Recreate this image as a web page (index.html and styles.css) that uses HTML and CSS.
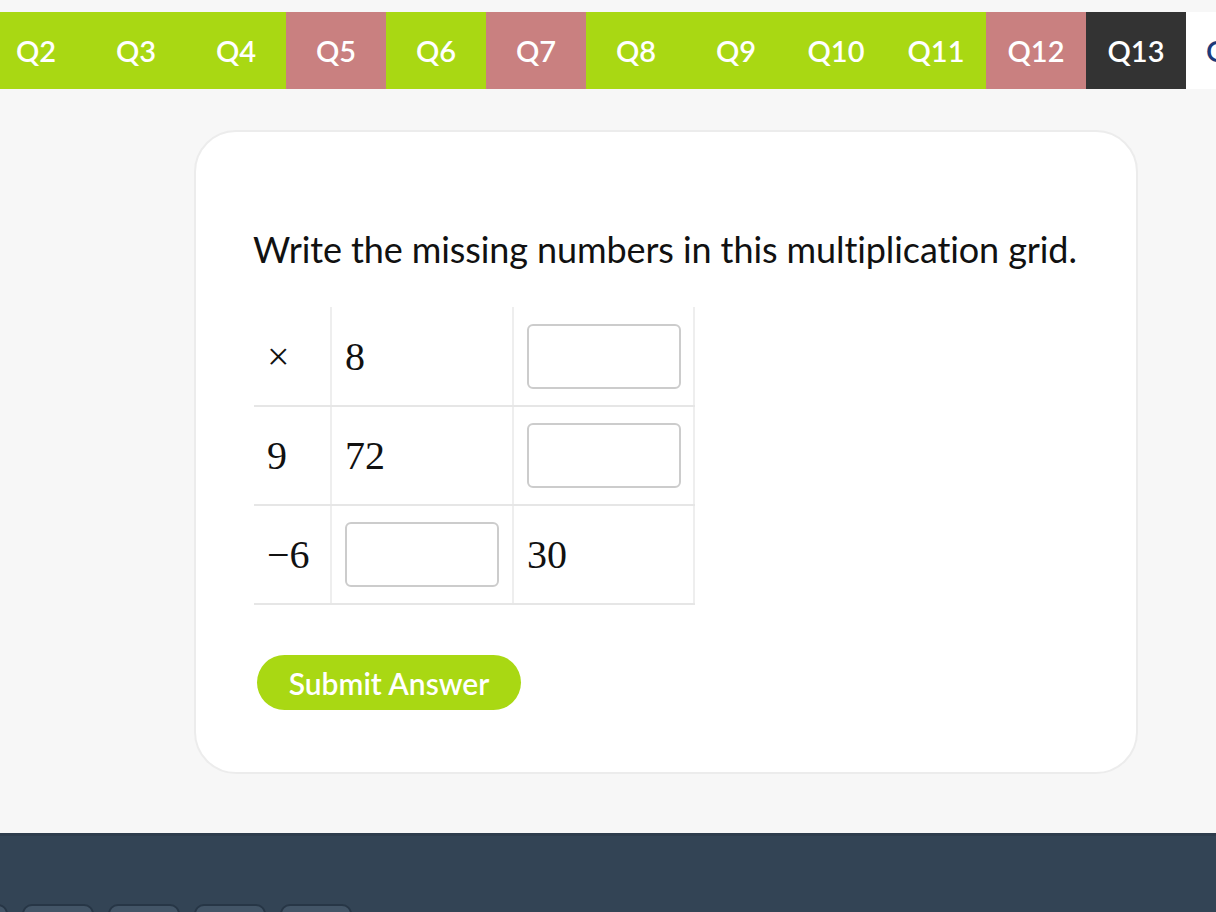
FILE: index.html
```html
<!DOCTYPE html>
<html>
<head>
<meta charset="utf-8">
<link rel="stylesheet" href="styles.css">
</head>
<body>
<nav class="qnav">
  <div class="qlist">
    <div class="qtab ok">Q1</div>
    <div class="qtab ok">Q2</div>
    <div class="qtab ok">Q3</div>
    <div class="qtab ok">Q4</div>
    <div class="qtab bad">Q5</div>
    <div class="qtab ok">Q6</div>
    <div class="qtab bad">Q7</div>
    <div class="qtab ok">Q8</div>
    <div class="qtab ok">Q9</div>
    <div class="qtab ok">Q10</div>
    <div class="qtab ok">Q11</div>
    <div class="qtab bad">Q12</div>
    <div class="qtab dark">Q13</div>
    <div class="qtab current">Q14</div>
  </div>
</nav>
<main class="page">
  <section class="card">
    <h1 class="prompt">Write the missing numbers in this multiplication grid.</h1>
    <table class="grid">
      <tr>
        <td class="head">×</td>
        <td class="mid">8</td>
        <td class="last"><input class="box" type="text"></td>
      </tr>
      <tr>
        <td class="head">9</td>
        <td class="mid">72</td>
        <td class="last"><input class="box" type="text"></td>
      </tr>
      <tr>
        <td class="head">−6</td>
        <td class="mid"><input class="box" type="text"></td>
        <td class="last">30</td>
      </tr>
    </table>
    <button class="submit">Submit Answer</button>
  </section>
</main>
<footer class="footer">
  <div class="keys">
    <div class="key"></div>
    <div class="key"></div>
    <div class="key"></div>
    <div class="key"></div>
    <div class="key"></div>
  </div>
</footer>
</body>
</html>
```
FILE: styles.css
```css
html, body {
  margin: 0;
  padding: 0;
}
body {
  background: #f7f7f7;
  font-family: Lato, "Open Sans", sans-serif;
  width: 1216px;
  height: 912px;
  overflow: hidden;
}
.qnav {
  margin-top: 12px;
  height: 77px;
  overflow: hidden;
}
.qlist {
  display: flex;
  margin-left: -114px;
}
.qtab {
  flex: 0 0 100px;
  height: 77px;
  display: flex;
  align-items: center;
  justify-content: center;
  font-size: 29px;
  font-weight: 600;
  color: #fff;
}
.qtab.ok { background: #a9d813; }
.qtab.bad { background: #c98080; }
.qtab.dark { background: #333333; }
.qtab.current {
  background: #fff;
  color: #1d3a7a;
  justify-content: flex-start;
  padding-left: 20px;
}
.page {
  padding-top: 41px;
  padding-left: 194px;
  height: 744px;
  box-sizing: border-box;
}
.card {
  width: 944px;
  height: 644px;
  box-sizing: border-box;
  background: #fff;
  border: 2px solid #ececec;
  border-radius: 42px;
  padding: 95px 0 0 57px;
}
.prompt {
  margin: 0;
  font-size: 36px;
  font-weight: 400;
  color: #111;
  line-height: 44px;
  letter-spacing: -0.1px;
}
.grid {
  margin-top: 36px;
  margin-left: 1px;
  border-collapse: collapse;
  font-family: "Liberation Serif", "DejaVu Serif", serif;
  font-size: 40px;
  color: #111;
}
.grid td {
  height: 99px;
  padding: 0 12px 0 13px;
  box-sizing: border-box;
  border-bottom: 2px solid #e6e6e6;
  vertical-align: middle;
}
.grid td.head {
  width: 77px;
  border-right: 2px solid #eeeeee;
}
.grid td.mid {
  width: 182px;
  border-right: 2px solid #eeeeee;
}
.grid td.last {
  width: 181px;
  border-right: 2px solid #eeeeee;
}
.box {
  display: block;
  width: 154px;
  height: 65px;
  box-sizing: border-box;
  border: 2px solid #cccccc;
  border-radius: 6px;
  background: #fff;
  margin: 0;
  padding: 0;
}
.submit {
  display: block;
  margin-top: 50px;
  margin-left: 4px;
  width: 264px;
  height: 55px;
  border: none;
  border-radius: 28px;
  background: #a9d813;
  color: #fff;
  font-family: Lato, sans-serif;
  font-size: 30px;
  font-weight: 600;
  padding: 0;
}
.footer {
  height: 79px;
  background: #334455;
  border-top: 3px solid #2e3d4d;
  box-sizing: border-box;
  overflow: hidden;
}
.keys {
  display: flex;
  gap: 14px;
  margin-top: 68px;
  margin-left: -64px;
}
.key {
  flex: 0 0 72px;
  height: 40px;
  background: #435567;
  border: 2px solid #273646;
  border-radius: 10px;
  box-sizing: border-box;
}
```
